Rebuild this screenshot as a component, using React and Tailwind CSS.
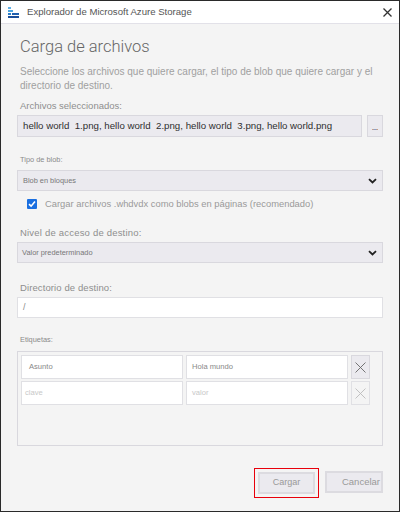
import React from "react";

const Chevron = () => (
    <svg width="9" height="6" viewBox="0 0 9 6" className="shrink-0">
        <path d="M1 1.2 L4.5 4.5 L8 1.2" fill="none" stroke="#222" strokeWidth="1.8" />
    </svg>
);

const XIcon = ({ color }) => (
    <svg width="11" height="11" viewBox="0 0 11 11">
        <path d="M0.5 0.5 L10.5 10.5 M10.5 0.5 L0.5 10.5" fill="none" stroke={color} strokeWidth="0.9" />
    </svg>
);

const Logo = () => (
    <svg width="11" height="11" viewBox="0 0 11 11">
        <rect x="0" y="0" width="3" height="2" fill="#5fb0e6" />
        <rect x="0" y="3" width="5" height="2" fill="#4aa3df" />
        <rect x="0" y="6" width="3" height="2" fill="#2b7fc9" />
        <rect x="4" y="6" width="7" height="2" fill="#1f5fae" />
        <rect x="0" y="9" width="11" height="2" fill="#1b4f9a" />
    </svg>
);

const label = "pl-[3px] text-[9.5px] leading-[14px] text-[#8e8e8e] whitespace-nowrap";
const smallLabel = "pl-[3px] text-[7.4px] leading-[12px] text-[#8a8a8a] whitespace-nowrap";

export default function App() {
    return (
        <div className="flex h-[512px] w-[400px] flex-col border border-[#2a2a2a] bg-[#f4f4f4] font-['Liberation_Sans',Arial,sans-serif]">
            {/* title bar */}
            <div className="flex h-[23px] shrink-0 items-center border-b border-[#e2e1e8] bg-white pl-[7px] pr-[7px]">
                <Logo />
                <span className="ml-[8px] text-[9.6px] text-[#555]">Explorador de Microsoft Azure Storage</span>
                <span className="ml-auto">
                    <svg width="9" height="9" viewBox="0 0 9 9">
                        <path d="M0.5 0.5 L8.5 8.5 M8.5 0.5 L0.5 8.5" fill="none" stroke="#333" strokeWidth="1.3" />
                    </svg>
                </span>
            </div>

            <div className="flex flex-1 flex-col px-[16px] pt-[11px]">
                <h1 className="pl-[3px] font-['Roboto',sans-serif] text-[16.5px] font-light leading-[24px] text-[#666]">Carga de archivos</h1>
                <p className="mt-[6px] pl-[3px] text-[10px] leading-[14px] text-[#a0a0a0]">
                    Seleccione los archivos que quiere cargar, el tipo de blob que quiere cargar y el
                    <br />
                    directorio de destino.
                </p>

                <label className={`mt-[6px] ${label}`}>Archivos seleccionados:</label>
                <div className="mt-[2px] flex gap-[5px]">
                    <div className="flex h-[22px] flex-1 items-center overflow-hidden whitespace-nowrap border border-[#d9d8de] bg-[#ebeaef] pl-[5px] text-[9.7px] text-[#2e2e2e]">
                        hello world&nbsp; 1.png, hello world&nbsp; 2.png, hello world&nbsp; 3.png, hello world.png
                    </div>
                    <div className="flex h-[22px] w-[16px] items-end justify-center border border-[#d9d8de] bg-[#ebeaef] pb-[6px]">
                        <span className="h-[1px] w-[6px] bg-[linear-gradient(90deg,#e0a070,#7aa0d8,#e0a070)]" />
                    </div>
                </div>

                <label className={`mt-[17px] ${smallLabel}`}>Tipo de blob:</label>
                <div className="mt-[4px] flex h-[21px] items-center justify-between border border-[#d9d8de] bg-[#ebeaef] pl-[5px] pr-[5px] text-[7.4px] text-[#777]">
                    <span>Blob en bloques</span>
                    <Chevron />
                </div>
                <div className="mt-[6px] flex h-[14px] items-center pl-[10px]">
                    <span className="flex h-[10px] w-[10px] items-center justify-center rounded-[1px] bg-[#1a6fe0]">
                        <svg width="8" height="8" viewBox="0 0 8 8">
                            <path d="M1 4.2 L3.1 6.2 L7 1.5" fill="none" stroke="white" strokeWidth="1.6" />
                        </svg>
                    </span>
                    <span className="ml-[8px] whitespace-nowrap text-[9.4px] text-[#9a9a9a]">Cargar archivos .whdvdx como blobs en páginas (recomendado)</span>
                </div>

                <label className={`mt-[15px] ${label} tracking-[0.2px]`}>Nivel de acceso de destino:</label>
                <div className="mt-[2px] flex h-[21px] items-center justify-between border border-[#d9d8de] bg-[#ebeaef] pl-[4px] pr-[5px] text-[7.4px] text-[#777]">
                    <span>Valor predeterminado</span>
                    <Chevron />
                </div>

                <label className={`mt-[18px] ${label} tracking-[0.1px]`}>Directorio de destino:</label>
                <div className="mt-[2px] flex h-[21px] items-center border border-[#e0e0e4] bg-white pl-[5px] text-[9px] text-[#888]">
                    /
                </div>

                <label className={`mt-[16px] ${smallLabel}`}>Etiquetas:</label>
                <div className="mt-[5px] flex h-[95px] flex-col gap-[2px] border border-[#d9d8de] pl-[3px] pt-[3px]">
                    <div className="flex gap-[3px]">
                        <div className="flex h-[24px] w-[162px] items-center border border-[#e0e0e4] bg-white pl-[7px] text-[7.6px] text-[#888]">Asunto</div>
                        <div className="flex h-[24px] w-[162px] items-center border border-[#e0e0e4] bg-white pl-[5px] text-[7.6px] text-[#888]">Hola mundo</div>
                        <div className="flex h-[24px] w-[19px] items-center justify-center border border-[#d9d8de] bg-[#ebeaef]">
                            <XIcon color="#666" />
                        </div>
                    </div>
                    <div className="flex gap-[3px]">
                        <div className="flex h-[24px] w-[162px] items-center border border-[#e0e0e4] bg-white pl-[3px] text-[7.6px] text-[#c8c8c8]">clave</div>
                        <div className="flex h-[24px] w-[162px] items-center border border-[#e0e0e4] bg-white pl-[5px] text-[7.6px] text-[#c8c8c8]">valor</div>
                        <div className="flex h-[24px] w-[19px] items-center justify-center border border-[#e0e0e4] bg-[#f4f4f4]">
                            <XIcon color="#bbb" />
                        </div>
                    </div>
                </div>

                <div className="mt-[22px] flex items-start justify-end gap-[6px]">
                    <div className="border border-[#e8000b] p-[3px]">
                        <button className="flex h-[22px] w-[57px] items-center justify-center border-2 border-[#dcdbe0] bg-[#ebeaef] text-[9px] text-[#999]">Cargar</button>
                    </div>
                    <button className="mt-[3px] flex h-[22px] w-[58px] items-center justify-end border-2 border-[#dcdbe0] bg-[#ebeaef] pr-[1px] text-[9.5px] text-[#999]">Cancelar</button>
                </div>
            </div>
        </div>
    );
}
